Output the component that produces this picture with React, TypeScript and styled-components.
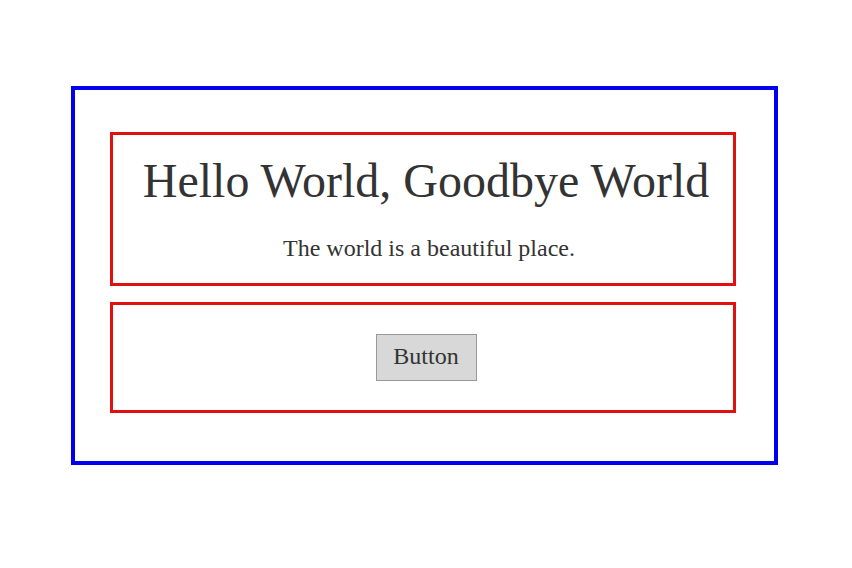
import React from "react";
import styled, { createGlobalStyle } from "styled-components";

const GlobalStyle = createGlobalStyle`
  body {
    margin: 0;
    background: #ffffff;
    font-family: "Liberation Serif", "Times New Roman", serif;
    color: #333333;
  }
`;

const Page = styled.div`
  width: 852px;
  height: 568px;
  padding: 86px 0 0 71px;
  box-sizing: border-box;
`;

const Outer = styled.div`
  width: 707px;
  height: 379px;
  box-sizing: border-box;
  border: 4px solid #0000ee;
  padding: 42px 38px 0 35px;
  display: flex;
  flex-direction: column;
  gap: 16px;
`;

const Panel = styled.div<{ $height: number }>`
  height: ${(p) => p.$height}px;
  box-sizing: border-box;
  border: 3px solid #e01010;
  display: flex;
  flex-direction: column;
  align-items: center;
`;

const Header = styled(Panel)`
  padding: 17px 0 0 6px;
`;

const Actions = styled(Panel)`
  justify-content: center;
`;

const Title = styled.h1`
  margin: 0;
  font-size: 48px;
  font-weight: normal;
  line-height: 1.2;
`;

const Subtitle = styled.p`
  margin: 24px 0 0 6px;
  font-size: 24px;
  line-height: 1.2;
`;

const Button = styled.button`
  width: 101px;
  height: 47px;
  margin-left: 6px;
  background: #d8d8d8;
  border: 1px solid #999999;
  font-family: "Liberation Serif", "Times New Roman", serif;
  font-size: 24px;
  color: #333333;
  padding: 0 0 2px;
`;

export default function App() {
  return (
    <Page>
      <GlobalStyle />
      <Outer>
        <Header $height={154}>
          <Title>Hello World, Goodbye World</Title>
          <Subtitle>The world is a beautiful place.</Subtitle>
        </Header>
        <Actions $height={111}>
          <Button>Button</Button>
        </Actions>
      </Outer>
    </Page>
  );
}
